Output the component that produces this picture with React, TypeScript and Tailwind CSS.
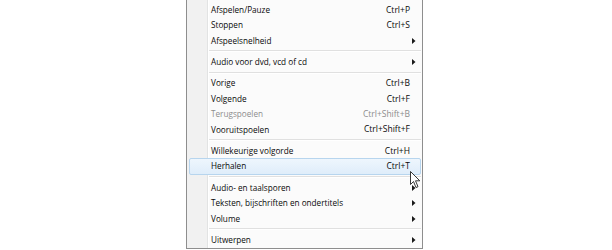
import React from "react";

type Item =
  | { type: "sep" }
  | { type: "item"; label: string; shortcut?: string; sub?: boolean; disabled?: boolean; hover?: boolean };

const items: Item[] = [
  { type: "item", label: "Afspelen/Pauze", shortcut: "Ctrl+P" },
  { type: "item", label: "Stoppen", shortcut: "Ctrl+S" },
  { type: "item", label: "Afspeelsnelheid", sub: true },
  { type: "sep" },
  { type: "item", label: "Audio voor dvd, vcd of cd", sub: true },
  { type: "sep" },
  { type: "item", label: "Vorige", shortcut: "Ctrl+B" },
  { type: "item", label: "Volgende", shortcut: "Ctrl+F" },
  { type: "item", label: "Terugspoelen", shortcut: "Ctrl+Shift+B", disabled: true },
  { type: "item", label: "Vooruitspoelen", shortcut: "Ctrl+Shift+F" },
  { type: "sep" },
  { type: "item", label: "Willekeurige volgorde", shortcut: "Ctrl+H" },
  { type: "item", label: "Herhalen", shortcut: "Ctrl+T", hover: true },
  { type: "sep" },
  { type: "item", label: "Audio- en taalsporen", sub: true },
  { type: "item", label: "Teksten, bijschriften en ondertitels", sub: true },
  { type: "item", label: "Volume", sub: true },
  { type: "sep" },
  { type: "item", label: "Uitwerpen", sub: true },
];

function Arrow() {
  return (
    <svg width="4" height="6" viewBox="0 0 4 6" className="block">
      <path d="M0 0 L3.5 3 L0 6 Z" fill="#1a1a1a" />
    </svg>
  );
}

export default function App() {
  return (
    <div
      className="relative w-[612px] h-[250px] bg-white overflow-hidden"
      style={{ fontFamily: '"Open Sans", "Noto Sans", sans-serif' }}
    >
      <div className="ml-[186px] w-[237px] border-x border-b border-[#8e8e8e] bg-[linear-gradient(to_right,#f1f1f1_0px,#f1f1f1_20px,#e2e3e3_20px,#e2e3e3_21px,#ffffff_21px,#ffffff_22px,#fbfbfb_22px)] pt-[2.3px]">
        {items.map((it, i) =>
          it.type === "sep" ? (
            <div key={i} className="h-[6px] pl-[22px] pr-[1px] flex flex-col justify-center">
              <div className="h-px bg-[#e0e0e0]" />
              <div className="h-px bg-white" />
            </div>
          ) : (
            <div
              key={i}
              className={`relative h-[15.4px] flex items-center leading-none ${
                it.disabled ? "text-[#8d8d8d]" : "text-[#0a0a0a]"
              }`}
            >
              {it.hover && (
                <div className="absolute left-[2px] right-[1px] top-[-1px] bottom-[-1px] rounded-[2px] border border-[#b7d5ee] bg-[linear-gradient(to_bottom,#eef6fd,#dfedfa)]" />
              )}
              <span className="relative pl-[24px] flex-1 whitespace-nowrap text-[8.2px]">{it.label}</span>
              {it.shortcut && (
                <span className="relative pr-[12px] whitespace-nowrap text-[8.5px]">{it.shortcut}</span>
              )}
              {it.sub && (
                <span className="relative pr-[6px]">
                  <Arrow />
                </span>
              )}
            </div>
          )
        )}
      </div>
      <svg
        className="absolute left-[410px] top-[171px]"
        width="11"
        height="18"
        viewBox="0 0 11 18"
      >
        <path
          d="M0.5 0.5 L0.5 13.5 L3.5 10.5 L6 16.5 L8 15.7 L5.5 9.8 L9.8 9.8 Z"
          fill="#fff"
          stroke="#222"
          strokeWidth="0.9"
          strokeLinejoin="round"
        />
      </svg>
    </div>
  );
}
